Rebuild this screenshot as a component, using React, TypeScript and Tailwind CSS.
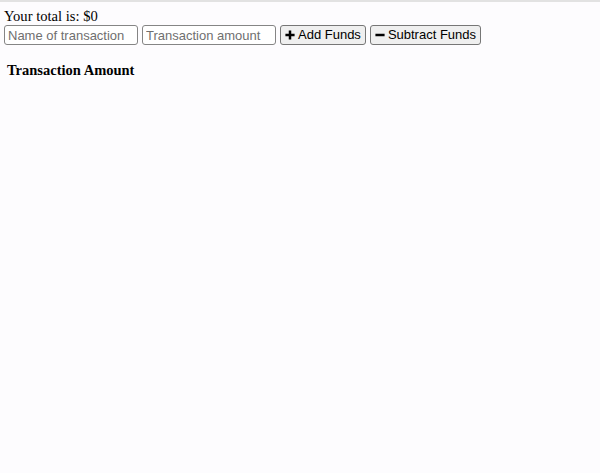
import { useState } from 'react';

export default function App() {
  const [total] = useState(0);

  return (
    <div className="min-h-[473px] bg-[#fdfcfe] border-t-2 border-[#e2e2e2] px-1 pt-[6px] font-['Liberation_Serif',serif] text-black">
      <div className="text-[14.6px] leading-[16px]">Your total is: ${total}</div>
      <div className="flex items-center gap-[4px] mt-[1px]">
        <input
          placeholder="Name of transaction"
          className="w-[134px] h-[20px] px-[3px] border border-[#858585] rounded-[3px] bg-white text-[13px] font-['Liberation_Sans',sans-serif] placeholder:text-[#6f6f6f] outline-none"
        />
        <input
          placeholder="Transaction amount"
          className="w-[134px] h-[20px] px-[3px] border border-[#858585] rounded-[3px] bg-white text-[13px] font-['Liberation_Sans',sans-serif] placeholder:text-[#6f6f6f] outline-none"
        />
        <button className="h-[20px] px-[4px] flex items-center gap-[3px] border border-[#767676] rounded-[3px] bg-[#efefef] text-[13px] font-['Liberation_Sans',sans-serif]">
          <svg width="10" height="10" viewBox="0 0 12 12">
            <path d="M6 0.5v11M0.5 6h11" stroke="black" strokeWidth="3" />
          </svg>
          Add Funds
        </button>
        <button className="h-[20px] px-[4px] flex items-center gap-[3px] border border-[#767676] rounded-[3px] bg-[#efefef] text-[13px] font-['Liberation_Sans',sans-serif]">
          <svg width="10" height="10" viewBox="0 0 12 12">
            <path d="M0.5 6h11" stroke="black" strokeWidth="3" />
          </svg>
          Subtract Funds
        </button>
      </div>
      <table className="mt-[15px] ml-[1px]">
        <thead>
          <tr>
            <th className="px-[2px] text-[14.5px] font-bold text-left">Transaction Amount</th>
          </tr>
        </thead>
        <tbody></tbody>
      </table>
    </div>
  );
}
